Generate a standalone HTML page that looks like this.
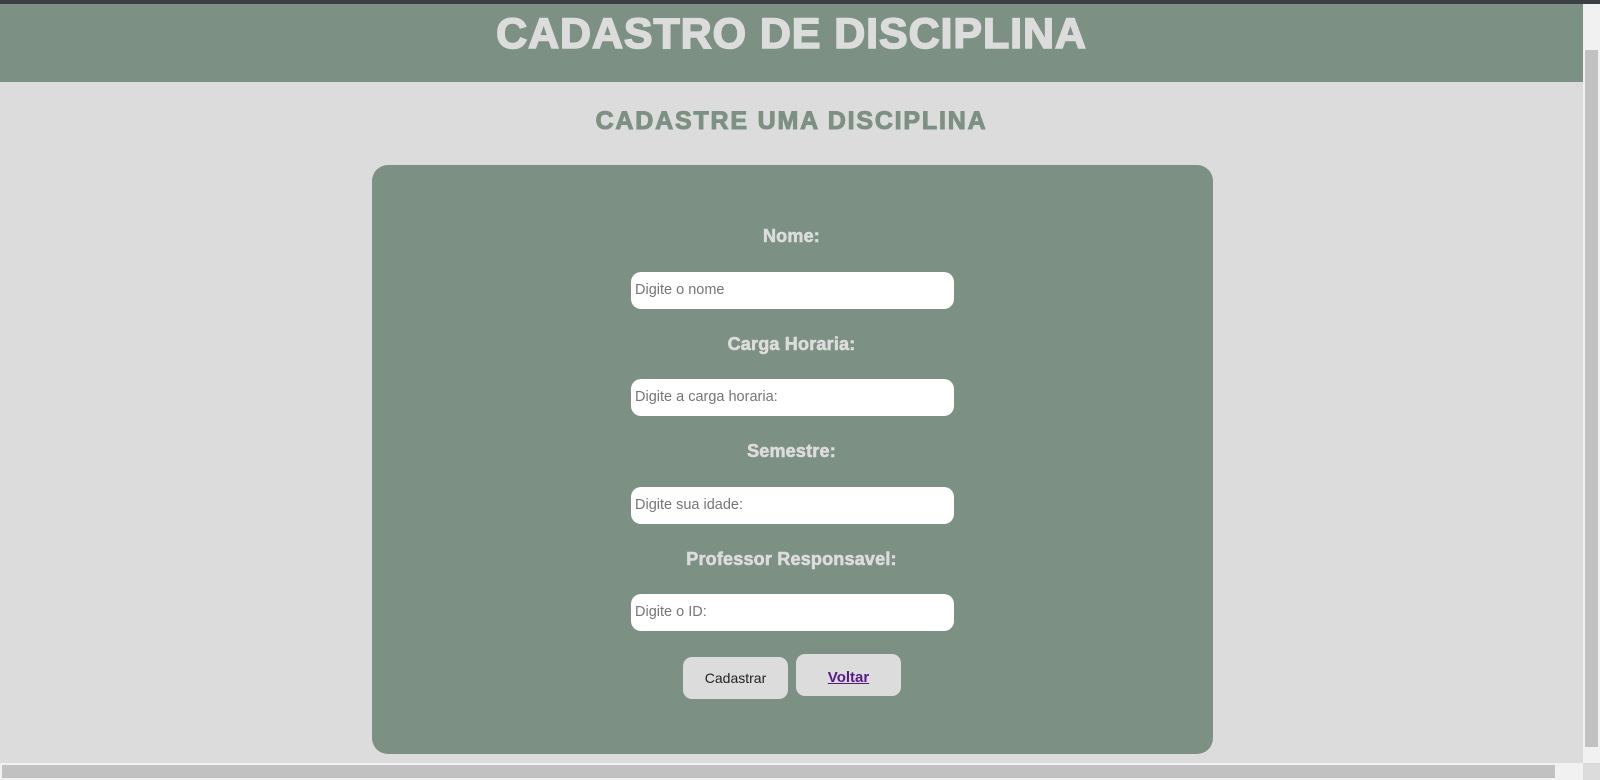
<!DOCTYPE html>
<html><head><style>
*{margin:0;padding:0;box-sizing:border-box}
html,body{width:1600px;height:780px;overflow:hidden;background:#dcdcdc;font-family:"Liberation Sans",Arial,sans-serif}
.top{position:absolute;left:0;top:0;width:1600px;height:4px;background:#3c4043}
.hdr{position:absolute;left:0;top:4px;width:1583px;height:78px;background:#7d9084}
.h1{position:absolute;left:0;width:1583px;text-align:center;top:10px;font-size:43px;font-weight:bold;color:#dcdcdc;letter-spacing:0.9px;-webkit-text-stroke:1.6px #dcdcdc}
.h2{position:absolute;left:0;width:1583px;text-align:center;top:107px;font-size:25px;font-weight:bold;color:#7d9084;letter-spacing:1.8px;-webkit-text-stroke:1px #7d9084}
.panel{position:absolute;left:372px;top:165px;width:841px;height:589px;background:#7d9084;border-radius:16px}
.lbl{position:absolute;left:0;width:1583px;text-align:center;font-size:18px;font-weight:bold;color:#dcdcdc;letter-spacing:.2px;-webkit-text-stroke:0.6px #dcdcdc}
.inp{position:absolute;left:631px;width:323px;height:37px;background:#fff;border-radius:10px;font-size:14.5px;color:#767676;padding:10px 0 0 4px}
.btn{position:absolute;width:105px;height:42px;background:#dcdcdc;border-radius:9px;text-align:center;font-size:14px;line-height:42px;color:#222}
.vs{position:absolute;right:0;top:4px;width:17px;height:759px;background:#f1f1f1}
.vs i{position:absolute;left:2px;top:46px;width:13px;height:697px;background:#c1c1c1}
.hs{position:absolute;left:0;top:763px;width:1583px;height:17px;background:#f1f1f1}
.hs i{position:absolute;left:2px;top:2px;width:1553px;height:13px;background:#c1c1c1}
.corner{position:absolute;right:0;top:763px;width:17px;height:17px;background:#dcdcdc}
</style></head><body>
<div class="top"></div>
<div class="hdr"></div>
<div class="h1">CADASTRO DE DISCIPLINA</div>
<div class="h2">CADASTRE UMA DISCIPLINA</div>
<div class="panel"></div>
<div class="lbl" style="top:226px">Nome:</div>
<div class="inp" style="top:272px">Digite o nome</div>
<div class="lbl" style="top:334px">Carga Horaria:</div>
<div class="inp" style="top:379px">Digite a carga horaria:</div>
<div class="lbl" style="top:441px">Semestre:</div>
<div class="inp" style="top:487px">Digite sua idade:</div>
<div class="lbl" style="top:549px">Professor Responsavel:</div>
<div class="inp" style="top:594px">Digite o ID:</div>
<div class="btn" style="left:683px;top:657px">Cadastrar</div>
<div class="btn" style="left:796px;top:654px;font-weight:bold;font-size:15px;line-height:48px;color:#551a8b;text-decoration:underline">Voltar</div>
<div class="vs"><i></i></div>
<div class="hs"><i></i></div>
<div class="corner"></div>
</body></html>
